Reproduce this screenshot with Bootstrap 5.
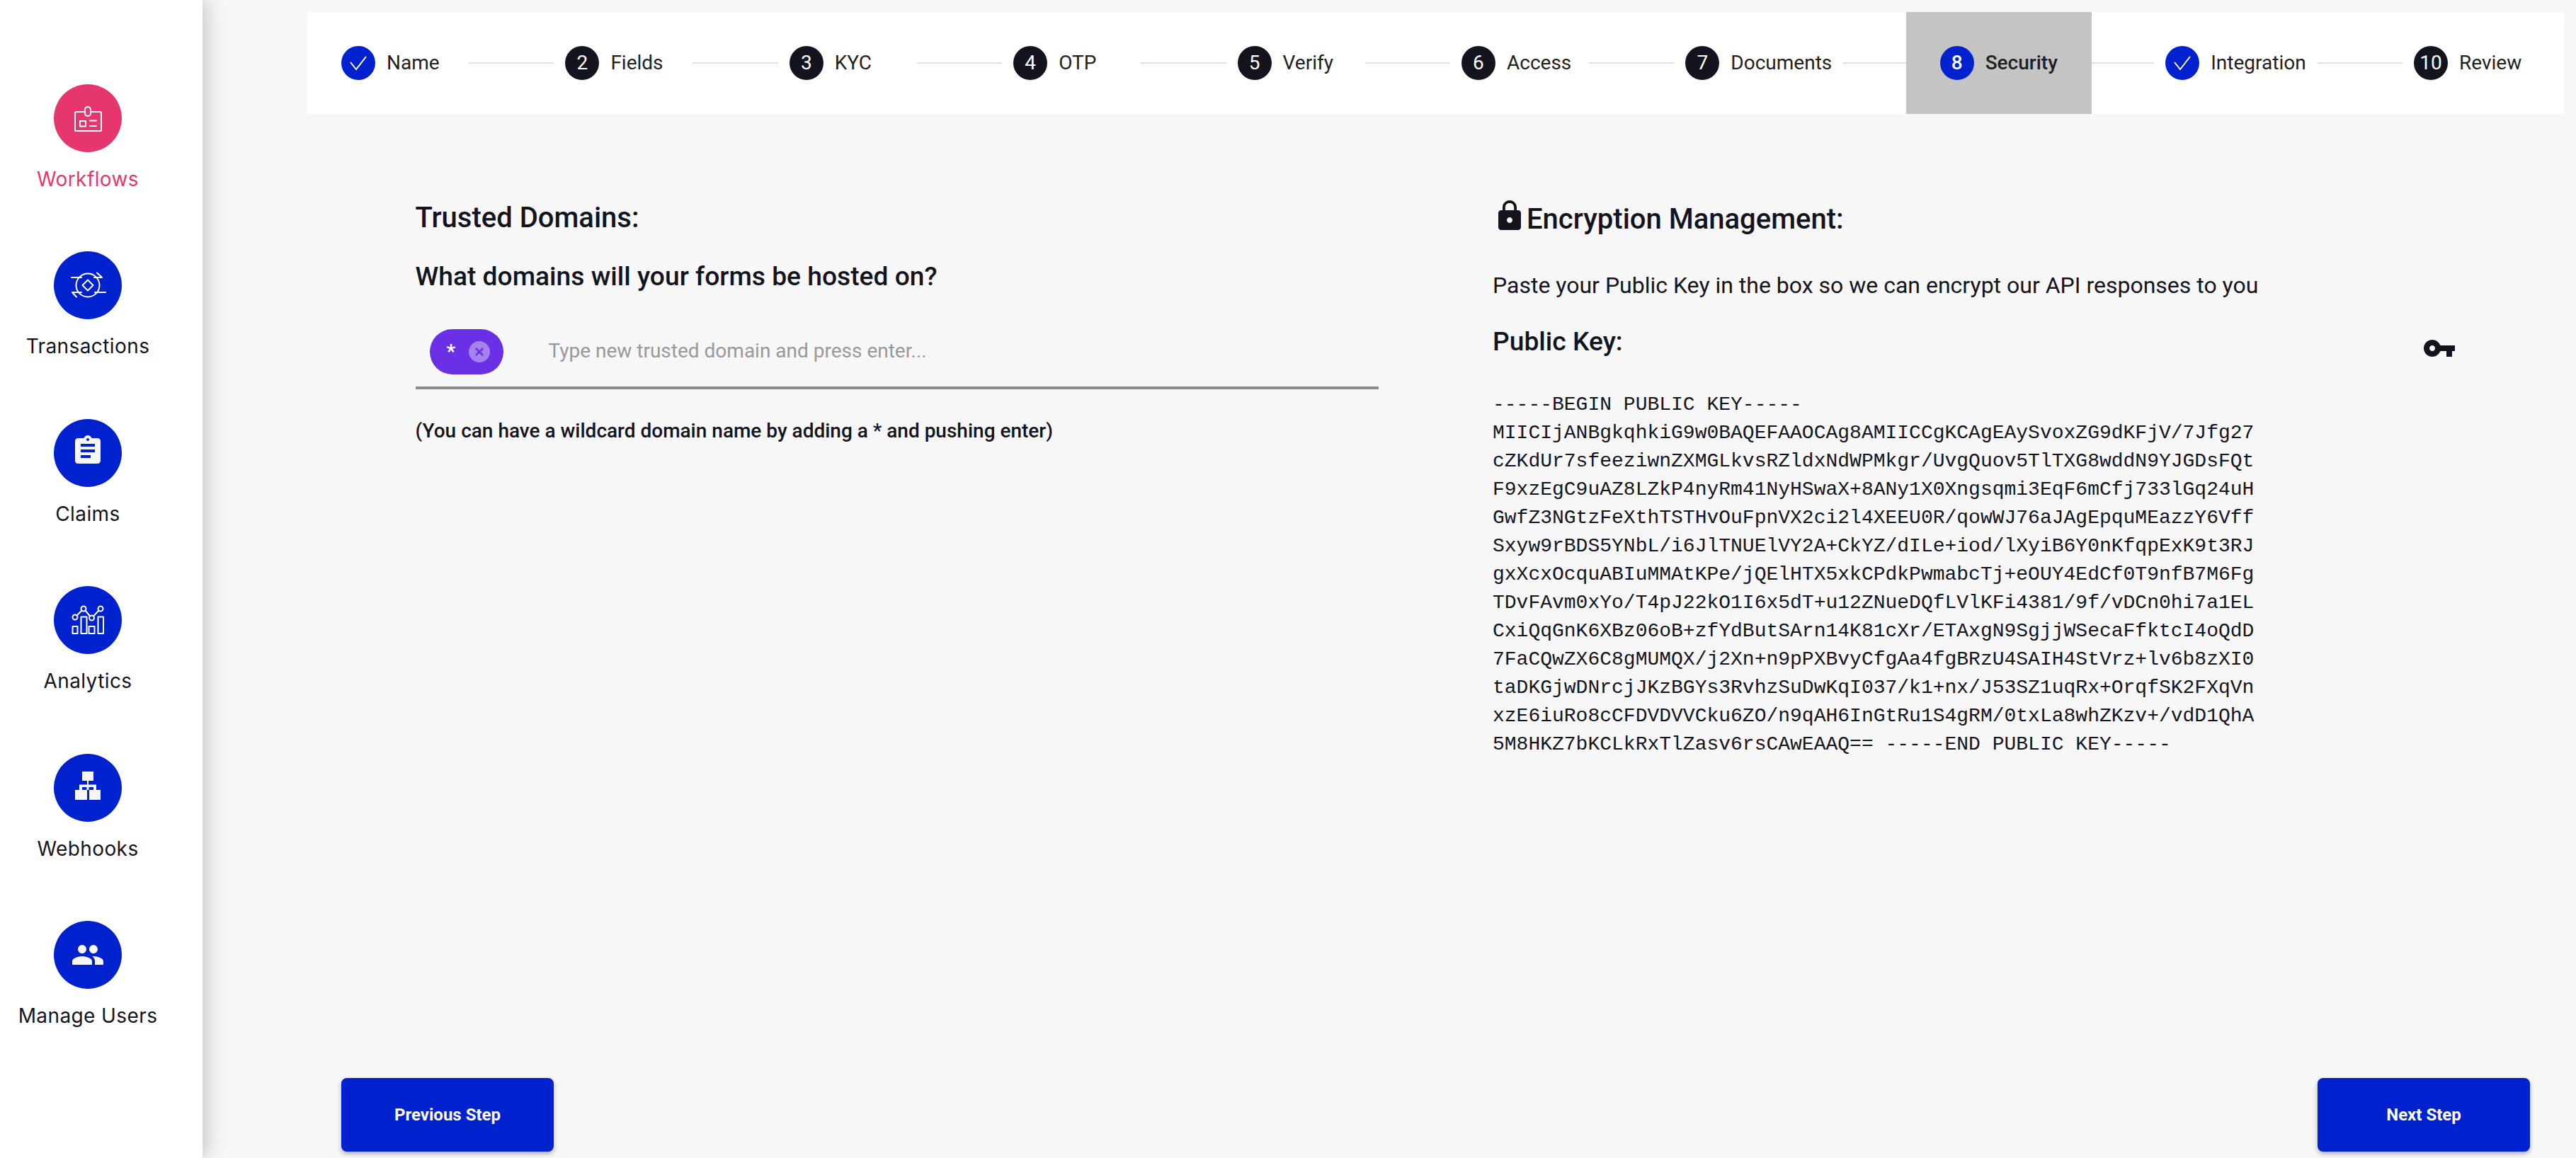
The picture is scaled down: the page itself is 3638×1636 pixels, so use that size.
<!DOCTYPE html>
<html lang="en">
<head>
<meta charset="utf-8">
<title>Security</title>
<link rel="stylesheet" href="https://cdn.jsdelivr.net/npm/bootstrap@5.3.0/dist/css/bootstrap.min.css">
<style>
html,body{height:100%;overflow:hidden}
body{background:#f7f7f7;font-family:Roboto,sans-serif;color:#14141f}
.shell{height:1636px}
.side{width:286px;background:#fff;box-shadow:4px 0 28px rgba(0,0,0,.22);padding:119px 38px 0 0;z-index:2;flex:none}
.side-item{height:236.4px;color:#14141f;text-decoration:none;font-family:Inter,sans-serif;font-size:28px;letter-spacing:.4px;line-height:38px;white-space:nowrap}
.side-item:hover{color:#14141f}
.side-item.on,.side-item.on:hover{color:#e5366d}
.disc{width:96px;height:96px;border-radius:50%;background:#0022ce;margin-bottom:19px}
.on .disc{background:#e5366d}
.disc svg{display:block}
.ln{fill:none;stroke:#fff;stroke-width:2;stroke-linecap:round;stroke-linejoin:round}
.solid{fill:#f6f6f6}
.work{min-width:0;padding:17px 17px 9px 148px}
.stepbar{height:144px;background:#fff;padding-left:48px;padding-right:48px;font-size:28px;color:#212121}
.dot{width:48px;height:48px;border-radius:50%;background:#14141f;color:#fff;flex:none;font-size:28px;margin-right:16px}
.dot.blue{background:#0022ce}
.lab{min-width:100px}
.conn{height:2px;background:#e0e0e0;width:120.4px;margin:0 16px;flex:none}
.conn.fill{flex:1;width:auto}
.conn.tight-end{margin-right:0}
.conn.tight-start{margin-left:0}
.cur{background:#c4c4c4;height:144px;padding:0 48px;font-weight:500}
.body-row{flex:1;min-height:0;padding-top:117px}
.left-pane{width:1674px;padding-left:152.500px;flex:none}
.right-pane{flex:1;min-width:0}
.hd{font-size:40px;font-weight:500;line-height:60px;margin:0;color:#14141f}
.hd.sm{font-size:37.2px}
.hd.second{margin-top:22px}
.lockicon{margin-top:3px;flex:none}
.hd.pushed{margin-top:2px}
.chipbox{width:1360px;height:85px;border-bottom:4px solid #8c8c8c;margin-top:45px;padding-left:20px}
.chipx{width:104px;height:64px;border-radius:32px;background:#6b2fe5;color:#fff;font-size:28px;font-weight:700;padding-left:24px;margin-right:64px;flex:none}
.chipx svg{margin-left:19px}
.ph{font-size:28px;color:#999;line-height:62px}
.hint{font-size:28px;font-weight:500;margin:38px 0 0;line-height:42px}
.para{font-size:32px;line-height:48px;margin:39px 0 0}
.keyrow{width:1361px;margin-top:25px}
.keyicon{margin-top:16px;flex:none}
.mono{font-family:"Liberation Mono",monospace;font-size:28px;line-height:40px;white-space:pre;color:#14141f;margin-top:36px}
.foot{padding:0 48px;flex:none}
.stepbtn{width:300px;height:104px;background:#0022ce;color:#fff;border:0;border-radius:8px;font-size:24px;font-weight:700;box-shadow:0 3px 6px rgba(0,0,0,.3)}
.stepbtn:hover{background:#0022ce;color:#fff}
</style>
</head>
<body>
<div class="shell d-flex">
  <nav class="side d-flex flex-column align-items-center">
    <a class="side-item on d-flex flex-column align-items-center" href="#">
      <span class="disc d-block"><svg width="96" height="96" viewBox="0 0 96 96"><path class="ln" d="M44 39H32a2 2 0 0 0-2 2v24a1 1 0 0 0 1 1h35a1 1 0 0 0 1-1V41a2 2 0 0 0-2-2H52"/><rect class="ln" x="44" y="32" width="8" height="13" rx="4"/><rect class="ln" x="37" y="52" width="8" height="7.500"/><path class="ln" d="M51 51.500h9M51 59h9"/></svg></span>
      Workflows
    </a>
    <a class="side-item d-flex flex-column align-items-center" href="#">
      <span class="disc d-block"><svg width="96" height="96" viewBox="0 0 96 96"><circle class="ln" cx="48" cy="48" r="16.500"/><path class="ln" d="M48 40.500l7.500 7.500-7.500 7.500-7.500-7.500z"/><path class="ln" d="M25 37h14M57 37h11l-7-6.500M73 58H58M39 58H26l6 6.500"/></svg></span>
      Transactions
    </a>
    <a class="side-item d-flex flex-column align-items-center" href="#">
      <span class="disc d-block"><svg width="96" height="96" viewBox="0 0 96 96"><path class="solid" transform="translate(24 21) scale(2)" d="M19 3h-4.180C14.400 1.840 13.300 1 12 1c-1.300 0-2.400.84-2.820 2H5c-1.100 0-2 .9-2 2v14c0 1.100.9 2 2 2h14c1.100 0 2-.9 2-2V5c0-1.100-.9-2-2-2zm-7 0c.55 0 1 .45 1 1s-.45 1-1 1-1-.45-1-1 .45-1 1-1zm2 14H7v-2h7v2zm3-4H7v-2h10v2zm0-4H7V7h10v2z"/></svg></span>
      Claims
    </a>
    <a class="side-item d-flex flex-column align-items-center" href="#">
      <span class="disc d-block"><svg width="96" height="96" viewBox="0 0 96 96"><rect class="ln" x="26.500" y="57" width="7" height="10"/><rect class="ln" x="38.500" y="43.500" width="8" height="23.500"/><rect class="ln" x="49.500" y="57" width="8" height="10"/><rect class="ln" x="62.500" y="43.500" width="7.500" height="23.500"/><circle class="ln" cx="30" cy="44" r="3.500"/><circle class="ln" cx="42" cy="32" r="3.500"/><circle class="ln" cx="53.500" cy="45" r="3.500"/><circle class="ln" cx="66" cy="32" r="3.500"/><path class="ln" d="M32.500 41.500l7-7M44.500 34.500l6.500 8M56 42.500l7.500-8"/></svg></span>
      Analytics
    </a>
    <a class="side-item d-flex flex-column align-items-center" href="#">
      <span class="disc d-block"><svg width="96" height="96" viewBox="0 0 96 96"><path class="solid" d="M40 25h16v13h-7v5.500h11V51h-4v-4H49.500v4h-3v-4H40v4h-4v-7.500h11V38h-7zM30 51h17v14H30zM50 51h16v14H50z"/></svg></span>
      Webhooks
    </a>
    <a class="side-item d-flex flex-column align-items-center" href="#">
      <span class="disc d-flex align-items-center justify-content-center"><svg width="48" height="48" viewBox="0 0 24 24"><path class="solid" d="M16 11c1.660 0 2.990-1.340 2.990-3S17.660 5 16 5c-1.660 0-3 1.340-3 3s1.340 3 3 3zm-8 0c1.660 0 2.990-1.340 2.990-3S9.660 5 8 5C6.340 5 5 6.340 5 8s1.340 3 3 3zm0 2c-2.330 0-7 1.170-7 3.500V19h14v-2.500c0-2.330-4.670-3.500-7-3.500zm8 0c-.29 0-.62.02-.97.05 1.160.84 1.970 1.970 1.970 3.450V19h6v-2.500c0-2.330-4.670-3.500-7-3.500z"/></svg></span>
      Manage Users
    </a>
  </nav>
  <main class="work flex-grow-1 d-flex flex-column">
    <div class="stepbar d-flex align-items-center">
      <div class="dot blue d-flex align-items-center justify-content-center"><svg width="48" height="48" viewBox="0 0 48 48"><path d="M13 23l8 10L35 15" fill="none" stroke="#fff" stroke-width="2"/></svg></div><div class="lab">Name</div><div class="conn"></div>
      <div class="dot d-flex align-items-center justify-content-center">2</div><div class="lab">Fields</div><div class="conn"></div>
      <div class="dot d-flex align-items-center justify-content-center">3</div><div class="lab">KYC</div><div class="conn"></div>
      <div class="dot d-flex align-items-center justify-content-center">4</div><div class="lab">OTP</div><div class="conn"></div>
      <div class="dot d-flex align-items-center justify-content-center">5</div><div class="lab">Verify</div><div class="conn"></div>
      <div class="dot d-flex align-items-center justify-content-center">6</div><div class="lab">Access</div><div class="conn"></div>
      <div class="dot d-flex align-items-center justify-content-center">7</div><div class="lab">Documents</div><div class="conn fill tight-end"></div>
      <div class="cur d-flex align-items-center"><div class="dot blue d-flex align-items-center justify-content-center">8</div><div>Security</div></div>
      <div class="conn fill tight-start"></div>
      <div class="dot blue d-flex align-items-center justify-content-center"><svg width="48" height="48" viewBox="0 0 48 48"><path d="M13 23l8 10L35 15" fill="none" stroke="#fff" stroke-width="2"/></svg></div><div class="lab">Integration</div><div class="conn"></div>
      <div class="dot d-flex align-items-center justify-content-center">10</div><div class="lab">Review</div>
    </div>
    <div class="body-row d-flex">
      <section class="left-pane">
        <h2 class="hd">Trusted Domains:</h2>
        <h2 class="hd sm second">What domains will your forms be hosted on?</h2>
        <div class="chipbox d-flex align-items-start">
          <span class="chipx d-flex align-items-center">*<svg width="30" height="30" viewBox="0 0 30 30"><circle cx="15" cy="15" r="15" fill="#a582ee"/><path d="M10 10l10 10M20 10L10 20" stroke="#6b2fe5" stroke-width="2.500"/></svg></span>
          <span class="ph">Type new trusted domain and press enter...</span>
        </div>
        <p class="hint">(You can have a wildcard domain name by adding a * and pushing enter)</p>
      </section>
      <section class="right-pane">
        <div class="d-flex align-items-start">
          <svg class="lockicon" width="48" height="48" viewBox="0 0 24 24"><path fill="#14141f" d="M18 8h-1V6c0-2.760-2.240-5-5-5S7 3.240 7 6v2H6c-1.100 0-2 .9-2 2v10c0 1.100.9 2 2 2h12c1.100 0 2-.9 2-2V10c0-1.100-.9-2-2-2zm-6 9c-1.100 0-2-.9-2-2s.9-2 2-2 2 .9 2 2-.9 2-2 2zm3.100-9H8.900V6c0-1.710 1.390-3.100 3.100-3.100 1.710 0 3.100 1.390 3.100 3.100v2z"/></svg>
          <h2 class="hd pushed">Encryption Management:</h2>
        </div>
        <p class="para">Paste your Public Key in the box so we can encrypt our API responses to you</p>
        <div class="keyrow d-flex justify-content-between align-items-start">
          <h2 class="hd sm">Public Key:</h2>
          <svg class="keyicon" width="48" height="48" viewBox="0 0 24 24"><path fill="#14141f" d="M12.650 10C11.830 7.670 9.610 6 7 6c-3.310 0-6 2.690-6 6s2.690 6 6 6c2.610 0 4.830-1.670 5.650-4H17v4h4v-4h2v-4H12.650zM7 14c-1.100 0-2-.9-2-2s.9-2 2-2 2 .9 2 2-.9 2-2 2z"/></svg>
        </div>
        <div class="mono">-----BEGIN PUBLIC KEY-----
MIICIjANBgkqhkiG9w0BAQEFAAOCAg8AMIICCgKCAgEAySvoxZG9dKFjV/7Jfg27
cZKdUr7sfeeziwnZXMGLkvsRZldxNdWPMkgr/UvgQuov5TlTXG8wddN9YJGDsFQt
F9xzEgC9uAZ8LZkP4nyRm41NyHSwaX+8ANy1X0Xngsqmi3EqF6mCfj733lGq24uH
GwfZ3NGtzFeXthTSTHvOuFpnVX2ci2l4XEEU0R/qowWJ76aJAgEpquMEazzY6Vff
Sxyw9rBDS5YNbL/i6JlTNUElVY2A+CkYZ/dILe+iod/lXyiB6Y0nKfqpExK9t3RJ
gxXcxOcquABIuMMAtKPe/jQElHTX5xkCPdkPwmabcTj+eOUY4EdCf0T9nfB7M6Fg
TDvFAvm0xYo/T4pJ22kO1I6x5dT+u12ZNueDQfLVlKFi4381/9f/vDCn0hi7a1EL
CxiQqGnK6XBz06oB+zfYdButSArn14K81cXr/ETAxgN9SgjjWSecaFfktcI4oQdD
7FaCQwZX6C8gMUMQX/j2Xn+n9pPXBvyCfgAa4fgBRzU4SAIH4StVrz+lv6b8zXI0
taDKGjwDNrcjJKzBGYs3RvhzSuDwKqI037/k1+nx/J53SZ1uqRx+OrqfSK2FXqVn
xzE6iuRo8cCFDVDVVCku6ZO/n9qAH6InGtRu1S4gRM/0txLa8whZKzv+/vdD1QhA
5M8HKZ7bKCLkRxTlZasv6rsCAwEAAQ== -----END PUBLIC KEY-----</div>
      </section>
    </div>
    <div class="foot d-flex justify-content-between">
      <button class="btn stepbtn" type="button">Previous Step</button>
      <button class="btn stepbtn" type="button">Next Step</button>
    </div>
  </main>
</div>
<script src="https://cdn.jsdelivr.net/npm/bootstrap@5.3.0/dist/js/bootstrap.bundle.min.js"></script>
</body>
</html>
